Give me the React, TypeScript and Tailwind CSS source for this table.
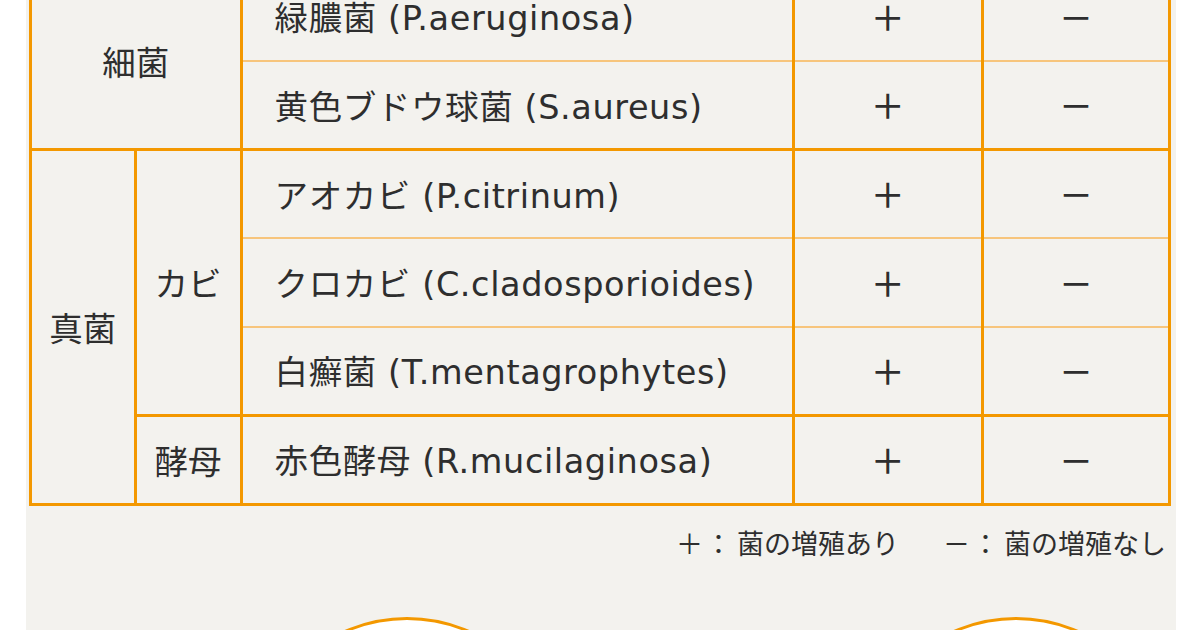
import React from "react";

type Row = {
  name: string;
  top: "thin" | "thick";
  bottom: "thin" | "thick";
};

const rows: Row[] = [
  { name: "緑膿菌 (P.aeruginosa)", top: "thick", bottom: "thin" },
  { name: "黄色ブドウ球菌 (S.aureus)", top: "thin", bottom: "thick" },
  { name: "アオカビ (P.citrinum)", top: "thick", bottom: "thin" },
  { name: "クロカビ (C.cladosporioides)", top: "thin", bottom: "thin" },
  { name: "白癬菌 (T.mentagrophytes)", top: "thin", bottom: "thick" },
  { name: "赤色酵母 (R.mucilaginosa)", top: "thick", bottom: "thick" },
];

function edge(r: Row) {
  const t = r.top === "thin" ? "border-t-2 border-t-[#f7c57c]" : "border-t-[3px] border-t-[#f39800]";
  const b = r.bottom === "thin" ? "border-b-2 border-b-[#f7c57c]" : "border-b-[3px] border-b-[#f39800]";
  return `${t} ${b} border-x-[3px] border-x-[#f39800] pt-[5px]`;
}

const groupCell = "border-[3px] border-[#f39800] text-center align-middle pt-[6px]";
const mark = "text-center align-middle text-[34px] font-medium";

export default function App() {
  return (
    <div
      className="w-[1200px] h-[630px] overflow-hidden bg-white text-[#2e2e2e]"
      style={{ fontFamily: '"DejaVu Sans", "Noto Sans CJK JP", sans-serif' }}
    >
      <div className="ml-[26px] w-[1150px] -mt-[29px] bg-[#f3f2ee] pl-[3px] pr-[4px] pb-[40px]">
        <table className="w-[1142px] table-fixed border-collapse text-[33.5px]">
          <colgroup>
            <col className="w-[104.5px]" />
            <col className="w-[106px]" />
            <col className="w-[552px]" />
            <col className="w-[189px]" />
            <col className="w-[187px]" />
          </colgroup>
          <tbody>
            {rows.map((r, i) => (
              <tr key={r.name} className="h-[88.6px]">
                {i === 0 && (
                  <td rowSpan={2} colSpan={2} className={groupCell}>
                    細菌
                  </td>
                )}
                {i === 2 && (
                  <td rowSpan={4} className={groupCell}>
                    真菌
                  </td>
                )}
                {i === 2 && (
                  <td rowSpan={3} className={groupCell}>
                    カビ
                  </td>
                )}
                {i === 5 && <td className={groupCell}>酵母</td>}
                <td className={`${edge(r)} pl-[32px] align-middle whitespace-nowrap tracking-[0.6px]`}>{r.name}</td>
                <td className={`${edge(r)} ${mark}`}>＋</td>
                <td className={`${edge(r)} ${mark}`}>－</td>
              </tr>
            ))}
          </tbody>
        </table>

        <div className="mt-[25px] flex justify-end pr-[6px] text-[27px] leading-none">
          <span className="flex">
            <span>＋</span>
            <span className="ml-[2px]">：</span>
            <span className="ml-[5px]">菌の増殖あり</span>
          </span>
          <span className="ml-[44px] flex">
            <span>－</span>
            <span className="ml-[2px]">：</span>
            <span className="ml-[5px]">菌の増殖なし</span>
          </span>
        </div>

        <div className="mt-[59px] flex">
          <div className="ml-[222px] w-[312px] h-[312px] shrink-0 rounded-full border-[3px] border-[#f39800] bg-white" />
          <div className="ml-[297px] w-[312px] h-[312px] shrink-0 rounded-full border-[3px] border-[#f39800] bg-white" />
        </div>
      </div>
    </div>
  );
}
